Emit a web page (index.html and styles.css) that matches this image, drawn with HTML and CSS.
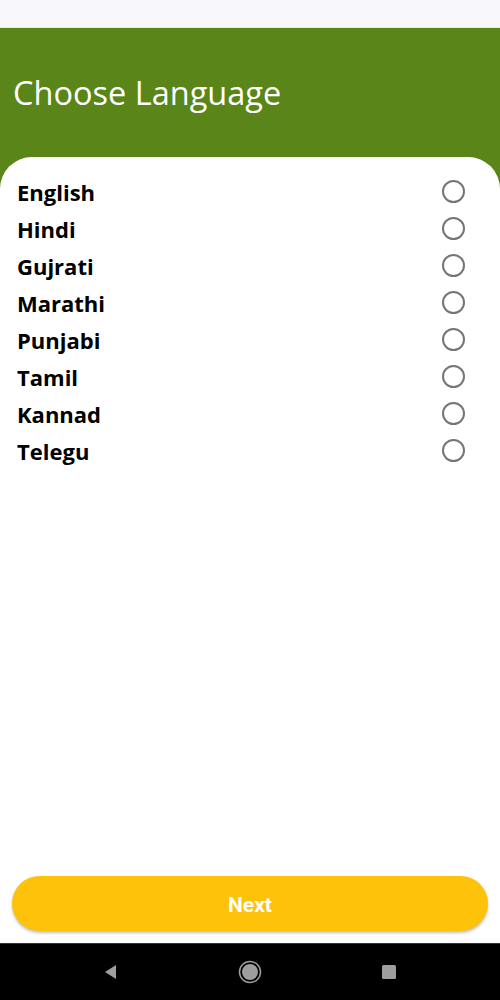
FILE: index.html
```html
<!DOCTYPE html>
<html lang="en">
<head>
  <meta charset="UTF-8">
  <title>Choose Language</title>
  <link rel="stylesheet" href="styles.css">
</head>
<body>
  <div class="screen">
    <div class="statusbar"></div>

    <header class="topbar">
      <h1>Choose Language</h1>
    </header>

    <div class="sheet">
      <ul class="langs">
        <li><span>English</span><span class="radio"></span></li>
        <li><span>Hindi</span><span class="radio"></span></li>
        <li><span>Gujrati</span><span class="radio"></span></li>
        <li><span>Marathi</span><span class="radio"></span></li>
        <li><span>Punjabi</span><span class="radio"></span></li>
        <li><span>Tamil</span><span class="radio"></span></li>
        <li><span>Kannad</span><span class="radio"></span></li>
        <li><span>Telegu</span><span class="radio"></span></li>
      </ul>

      <button class="next">Next</button>
    </div>

    <!-- barra de navegacion -->
    <nav class="navbar">
      <svg width="16" height="16" viewBox="0 0 16 16"><polygon points="13,1 13,15 2,8" fill="#9e9e9e"/></svg>
      <svg width="24" height="24" viewBox="0 0 24 24"><circle cx="12" cy="12" r="10.5" fill="none" stroke="#9e9e9e" stroke-width="1.5"/><circle cx="12" cy="12" r="8" fill="#9e9e9e"/></svg>
      <svg width="16" height="16" viewBox="0 0 16 16"><rect x="1" y="1" width="14" height="14" rx="1.5" fill="#9e9e9e"/></svg>
    </nav>
  </div>
</body>
</html>
```

FILE: styles.css
```css
body {
  margin: 0;
  padding: 0;
  font-family: "Open Sans", Arial, sans-serif;
}

.screen {
  width: 500px;
  height: 1000px;
  display: flex;
  flex-direction: column;
  background-color: #5a8519;
}

.statusbar {
  height: 27px;
  background-color: #f8f7fb;
  border-bottom: 1px solid #e8ecdf;
}

.topbar {
  height: 129px;
}

.topbar h1 {
  margin: 0;
  padding: 45px 0 0 13px;
  font-size: 32.5px;
  font-weight: 400;
  line-height: 40px;
  color: white;
}

.sheet {
  flex: 1;
  display: flex;
  flex-direction: column;
  background-color: white;
  border-radius: 32px 32px 0 0;
  padding: 16px 12px 12px 12px;
}

.langs {
  list-style: none;
  margin: 0;
  padding: 0 0 0 5px;
  flex: 1;
}

.langs li {
  height: 37px;
  display: flex;
  align-items: center;
  justify-content: space-between;
  font-size: 22px;
  font-weight: 700;
  color: #000;
}

.radio {
  width: 19px;
  height: 19px;
  border: 2.3px solid #757575;
  border-radius: 50%;
  margin-right: 23px;
}

.next {
  height: 55px;
  margin-top: 1px;
  padding-top: 3px;
  border: none;
  border-radius: 28px;
  background-color: #ffc20a;
  color: white;
  font-family: Roboto, Arial, sans-serif;
  font-size: 21px;
  font-weight: 700;
  box-shadow: 0 2px 3px rgba(0,0,0,0.25);
}

.navbar {
  height: 56px;
  background-color: #000;
  border-top: 1px solid #333;
  display: flex;
  align-items: center;
  justify-content: space-between;
  padding: 0 103px;
}
```
